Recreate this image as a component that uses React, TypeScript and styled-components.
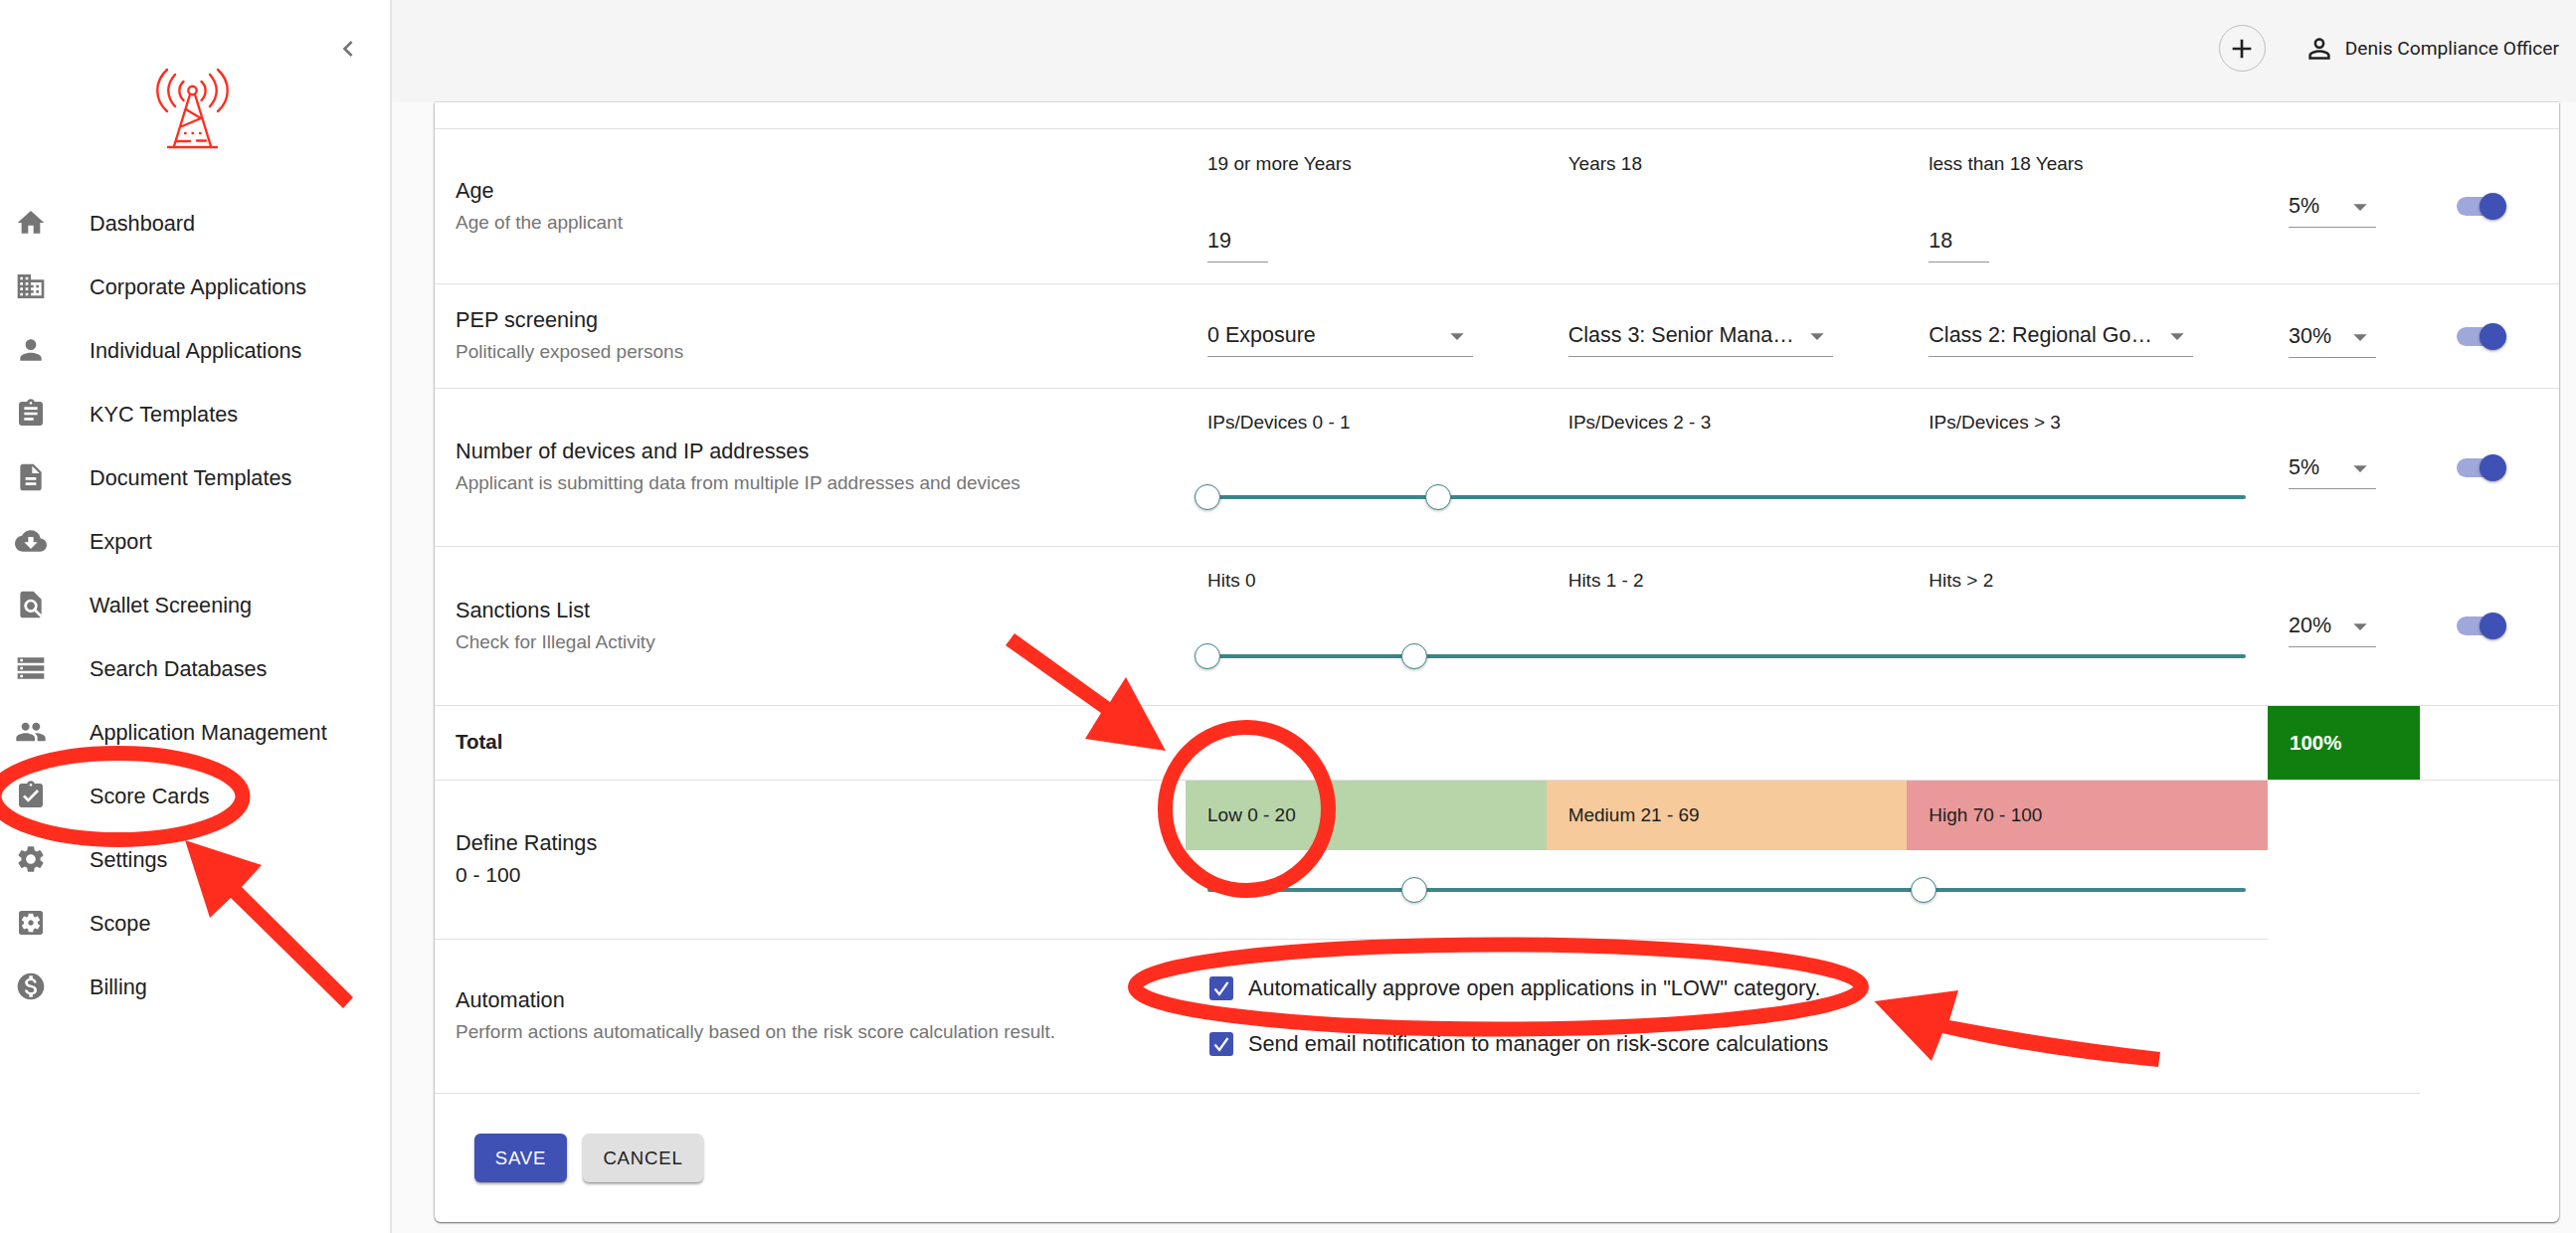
import React from "react";
import styled, { createGlobalStyle } from "styled-components";
import {
  MdHome, MdBusiness, MdPerson, MdAssignment, MdDescription, MdCloudDownload, MdFindInPage,
  MdStorage, MdPeople, MdAssignmentTurnedIn, MdSettings, MdSettingsApplications, MdMonetizationOn,
  MdChevronLeft, MdAdd, MdPersonOutline, MdArrowDropDown,
} from "react-icons/md";

const Global = createGlobalStyle`
  html, body { margin: 0; padding: 0; background: #fafafa; }
  body { font-family: "Liberation Sans", Arial, sans-serif; color: #212121; }
  * { box-sizing: border-box; }
`;

const Root = styled.div`
  position: relative;
  width: 2590px;
  height: 1240px;
  overflow: hidden;
  display: flex;
  background: #fafafa;
`;

const Sidebar = styled.aside`
  width: 394px;
  flex: none;
  background: #fff;
  border-right: 2px solid #e4e4e4;
  display: flex;
  flex-direction: column;
`;
const CollapseRow = styled.div`
  padding: 33px 26px 0 0;
  display: flex;
  justify-content: flex-end;
  color: #757575;
  height: 65px;
`;
const LogoRow = styled.div`
  margin-top: 2px;
  height: 84px;
  padding-left: 155px;
`;
const Nav = styled.nav`
  margin-top: 42px;
  display: flex;
  flex-direction: column;
`;
const NavItem = styled.div`
  height: 64px;
  display: flex;
  align-items: center;
  padding-left: 15px;
  gap: 43px;
  font-size: 21.7px;
  color: #212121;
  svg { color: #757575; flex: none; margin-top: -2px; }
`;

const Main = styled.main`
  flex: 1;
  display: flex;
  flex-direction: column;
  min-width: 0;
`;
const Header = styled.header`
  height: 103px;
  flex: none;
  background: #f5f5f5;
  display: flex;
  align-items: center;
  justify-content: flex-end;
  padding: 0 17px 6px 0;
  color: #212121;
  font-family: Roboto, "Liberation Sans", sans-serif;
  font-size: 19.2px;
`;
const AddButton = styled.div`
  width: 47px;
  height: 47px;
  border-radius: 50%;
  border: 1px solid #bdbdbd;
  display: flex;
  align-items: center;
  justify-content: center;
  margin-right: 38px;
`;
const UserName = styled.div`
  margin-left: 10px;
`;

const Card = styled.section`
  margin-left: 43px;
  width: 2136px;
  height: 1126px;
  background: #fff;
  border-radius: 0 0 6px 6px;
  box-shadow: 0 1px 2px rgba(0,0,0,.55), 0 0 2px rgba(0,0,0,.3);
`;
const Row = styled.div<{ $h: number; $w?: number }>`
  height: ${(p) => p.$h}px;
  width: ${(p) => p.$w ?? 2136}px;
  border-bottom: 1px solid #e0e0e0;
  display: grid;
  grid-template-columns: ${(p) => (p.$w === 1843 ? "755px 1088px" : p.$w === 1996 ? "755px 1241px" : "755px 1088px 153px 140px")};
`;
const LabelCell = styled.div<{ $pb?: number }>`
  padding: 0 0 ${(p) => p.$pb ?? 0}px 21px;
  display: flex;
  flex-direction: column;
  justify-content: center;
`;
const Title = styled.div`
  font-size: 21.7px;
  line-height: 32px;
  color: #212121;
`;
const Sub = styled.div<{ $dark?: boolean }>`
  font-size: ${(p) => (p.$dark ? 21 : 19)}px;
  line-height: 32px;
  color: ${(p) => (p.$dark ? "#212121" : "#757575")};
`;
const TotalLabel = styled.div`
  grid-column: span 2;
  padding: 0 0 2px 21px;
  display: flex;
  align-items: center;
  font-size: 20.5px;
  font-weight: 700;
`;
const Options = styled.div<{ $pt: number }>`
  padding: ${(p) => p.$pt}px 22px 0;
  display: grid;
  grid-template-columns: repeat(3, 1fr);
  column-gap: 44px;
  align-content: start;
  align-items: start;
`;
const OptLabel = styled.div`
  font-size: 19px;
  line-height: 24px;
  color: #212121;
`;
const FieldStack = styled.div``;
const NumberField = styled.div`
  width: 61px;
  height: 43px;
  margin-top: 44px;
  border-bottom: 1px solid #949494;
  display: flex;
  align-items: center;
  font-size: 21.5px;
`;
const Select = styled.div<{ $w: number }>`
  position: relative;
  width: ${(p) => p.$w}px;
  height: 43px;
  border-bottom: 1px solid #949494;
  line-height: 42px;
  font-size: 21.5px;
  color: #212121;
  white-space: nowrap;
  svg {
    position: absolute;
    right: 0;
    top: 6px;
    color: #757575;
  }
`;
const PercentCell = styled.div`
  padding-left: 21px;
  display: flex;
  align-items: center;
`;
const SwitchCell = styled.div`
  padding-left: 37px;
  display: flex;
  align-items: center;
`;
const SwitchTrack = styled.div`
  position: relative;
  width: 46px;
  height: 19px;
  border-radius: 10px;
  background: #9fa8da;
`;
const SwitchThumb = styled.div`
  position: absolute;
  right: -4px;
  top: -4px;
  width: 27px;
  height: 27px;
  border-radius: 50%;
  background: #3f51b5;
  box-shadow: 0 1px 3px rgba(0,0,0,.4);
`;
const SliderBox = styled.div<{ $mt: number }>`
  grid-column: 1 / -1;
  margin-top: ${(p) => p.$mt}px;
  position: relative;
  height: 26px;
  display: flex;
  align-items: center;
`;
const SliderTrack = styled.div`
  width: 100%;
  height: 4px;
  background: #3d8588;
  border-radius: 2px;
`;
const SliderThumb = styled.div`
  position: absolute;
  top: 0;
  width: 26px;
  height: 26px;
  margin-left: -13px;
  border-radius: 50%;
  background: #fff;
  border: 1px solid #3d8588;
  box-shadow: 0 1px 3px rgba(0,0,0,.25);
`;
const GreenCell = styled.div`
  background: #117f10;
  color: #fff;
  font-weight: 700;
  font-size: 20.5px;
  display: flex;
  align-items: center;
  padding-left: 22px;
  height: 74px;
`;
const RatingColumn = styled.div`
  display: flex;
  flex-direction: column;
`;
const RatingBars = styled.div`
  display: grid;
  grid-template-columns: repeat(3, 1fr);
  height: 70px;
`;
const RatingBar = styled.div<{ $bg: string }>`
  background: ${(p) => p.$bg};
  padding-left: 22px;
  display: flex;
  align-items: center;
  font-size: 19px;
  color: #212121;
`;
const RatingSlider = styled.div`
  padding: 0 22px;
  display: grid;
`;
const Checks = styled.div`
  padding: 36px 0 0 24px;
  display: flex;
  flex-direction: column;
  gap: 31px;
`;
const CheckRow = styled.div`
  display: flex;
  align-items: center;
  gap: 15px;
  font-size: 21.7px;
  height: 25px;
  color: #212121;
`;
const CheckBox = styled.div`
  width: 24px;
  height: 24px;
  border-radius: 3px;
  background: #3f51b5;
  display: flex;
  align-items: center;
  justify-content: center;
`;
const Footer = styled.div`
  padding: 40px 0 0 40px;
  display: flex;
  gap: 16px;
`;
const Button = styled.div<{ $primary?: boolean }>`
  height: 49px;
  width: ${(p) => (p.$primary ? 93 : 121)}px;
  border-radius: 6px;
  background: ${(p) => (p.$primary ? "#3f51b5" : "#e0e0e0")};
  color: ${(p) => (p.$primary ? "#fff" : "#212121")};
  font-size: 18.6px;
  letter-spacing: 0.8px;
  display: flex;
  align-items: center;
  justify-content: center;
  box-shadow: 0 2px 3px rgba(0,0,0,.3), 0 1px 1px rgba(0,0,0,.14);
`;
const Annotations = styled.svg`
  position: absolute;
  left: 0;
  top: 0;
  pointer-events: none;
`;

const navItems: [React.ComponentType<{ size?: number }>, string][] = [
  [MdHome, "Dashboard"],
  [MdBusiness, "Corporate Applications"],
  [MdPerson, "Individual Applications"],
  [MdAssignment, "KYC Templates"],
  [MdDescription, "Document Templates"],
  [MdCloudDownload, "Export"],
  [MdFindInPage, "Wallet Screening"],
  [MdStorage, "Search Databases"],
  [MdPeople, "Application Management"],
  [MdAssignmentTurnedIn, "Score Cards"],
  [MdSettings, "Settings"],
  [MdSettingsApplications, "Scope"],
  [MdMonetizationOn, "Billing"],
];

const Logo = () => (
  <svg width="78" height="84" viewBox="155 67 78 84" fill="none" stroke="#ff2d1e" strokeWidth="2.4" strokeLinecap="round" strokeLinejoin="round">
    <circle cx="193.5" cy="91" r="4.2" />
    <path d="M168 70C155 82 155 100 168 112M176 75C167 85 167 97 176 107M184.5 82C179 87 179 95 184.5 101" />
    <path d="M219 70C232 82 232 100 219 112M211 75C220 85 220 97 211 107M202.5 82C208 87 208 95 202.5 101" />
    <path d="M191 95L175 147M196 95L212 147M169 148H218M187 110L202 119L183 127" />
    <path d="M186 134H186.6M193.5 134H194.1M201 134H201.6M198 141.5H207M177 142H191" />
  </svg>
);

const Tick = () => (
  <svg width="24" height="24" viewBox="0 0 24 24" fill="none" stroke="#fff" strokeWidth="2.2">
    <path d="M5.5 12.5L10 18L18.5 6" />
  </svg>
);

const Pct = ({ v }: { v: string }) => (
  <PercentCell>
    <Select $w={88}>
      {v}
      <MdArrowDropDown size={32} />
    </Select>
  </PercentCell>
);
const Toggle = () => (
  <SwitchCell>
    <SwitchTrack>
      <SwitchThumb />
    </SwitchTrack>
  </SwitchCell>
);
const Label = ({ t, s }: { t: string; s: string }) => (
  <LabelCell>
    <Title>{t}</Title>
    <Sub>{s}</Sub>
  </LabelCell>
);
const Slider = ({ mt, stops }: { mt: number; stops: number[] }) => (
  <SliderBox $mt={mt}>
    <SliderTrack />
    {stops.map((x) => (
      <SliderThumb key={x} style={{ left: `${x}px` }} />
    ))}
  </SliderBox>
);

export default function App() {
  return (
    <Root>
      <Global />
      <Sidebar>
        <CollapseRow>
          <MdChevronLeft size={32} />
        </CollapseRow>
        <LogoRow>
          <Logo />
        </LogoRow>
        <Nav>
          {navItems.map(([Icon, label]) => (
            <NavItem key={label}>
              <Icon size={32} />
              {label}
            </NavItem>
          ))}
        </Nav>
      </Sidebar>
      <Main>
        <Header>
          <AddButton>
            <MdAdd size={32} />
          </AddButton>
          <MdPersonOutline size={32} />
          <UserName>Denis Compliance Officer</UserName>
        </Header>
        <Card>
          <Row $h={27} />
          <Row $h={156}>
            <Label t="Age" s="Age of the applicant" />
            <Options $pt={23}>
              <FieldStack>
                <OptLabel>19 or more Years</OptLabel>
                <NumberField>19</NumberField>
              </FieldStack>
              <FieldStack>
                <OptLabel>Years 18</OptLabel>
              </FieldStack>
              <FieldStack>
                <OptLabel>less than 18 Years</OptLabel>
                <NumberField>18</NumberField>
              </FieldStack>
            </Options>
            <Pct v="5%" />
            <Toggle />
          </Row>
          <Row $h={105}>
            <Label t="PEP screening" s="Politically exposed persons" />
            <Options $pt={30}>
              <Select $w={267}>0 Exposure<MdArrowDropDown size={32} /></Select>
              <Select $w={266}>Class 3: Senior Mana…<MdArrowDropDown size={32} /></Select>
              <Select $w={266}>Class 2: Regional Go…<MdArrowDropDown size={32} /></Select>
            </Options>
            <Pct v="30%" />
            <Toggle />
          </Row>
          <Row $h={159}>
            <Label t="Number of devices and IP addresses" s="Applicant is submitting data from multiple IP addresses and devices" />
            <Options $pt={22}>
              <OptLabel>IPs/Devices 0 - 1</OptLabel>
              <OptLabel>IPs/Devices 2 - 3</OptLabel>
              <OptLabel>IPs/Devices &gt; 3</OptLabel>
              <Slider mt={50} stops={[0, 232]} />
            </Options>
            <Pct v="5%" />
            <Toggle />
          </Row>
          <Row $h={160}>
            <Label t="Sanctions List" s="Check for Illegal Activity" />
            <Options $pt={22}>
              <OptLabel>Hits 0</OptLabel>
              <OptLabel>Hits 1 - 2</OptLabel>
              <OptLabel>Hits &gt; 2</OptLabel>
              <Slider mt={51} stops={[0, 208]} />
            </Options>
            <Pct v="20%" />
            <Toggle />
          </Row>
          <Row $h={75}>
            <TotalLabel>Total</TotalLabel>
            <GreenCell>100%</GreenCell>
          </Row>
          <Row $h={160} $w={1843}>
            <LabelCell $pb={2}>
              <Title>Define Ratings</Title>
              <Sub $dark>0 - 100</Sub>
            </LabelCell>
            <RatingColumn>
              <RatingBars>
                <RatingBar $bg="#b7d5a9">Low 0 - 20</RatingBar>
                <RatingBar $bg="#f6ca9b">Medium 21 - 69</RatingBar>
                <RatingBar $bg="#e99999">High 70 - 100</RatingBar>
              </RatingBars>
              <RatingSlider>
                <Slider mt={27} stops={[208, 720]} />
              </RatingSlider>
            </RatingColumn>
          </Row>
          <Row $h={155} $w={1996}>
            <Label t="Automation" s="Perform actions automatically based on the risk score calculation result." />
            <Checks>
              <CheckRow>
                <CheckBox><Tick /></CheckBox>
                Automatically approve open applications in "LOW" category.
              </CheckRow>
              <CheckRow>
                <CheckBox><Tick /></CheckBox>
                Send email notification to manager on risk-score calculations
              </CheckRow>
            </Checks>
          </Row>
          <Footer>
            <Button $primary>SAVE</Button>
            <Button>CANCEL</Button>
          </Footer>
        </Card>
      </Main>
      <Annotations width="2590" height="1240" viewBox="0 0 2590 1240">
        <g fill="none" stroke="#ff2d1e" strokeWidth="15">
          <ellipse cx="119" cy="801" rx="125" ry="43.5" />
          <circle cx="1253.5" cy="813.5" r="82" />
          <ellipse cx="1506.5" cy="992.5" rx="365" ry="42.5" />
        </g>
        <g fill="#ff2d1e">
          <polygon points="186,845 263,870 243,892 355,1003 345,1014 232,903 211,923" />
          <polygon points="1020,637 1116,706 1132,681 1172,755 1091,743 1107,717 1011,649" />
          <path d="M1884.5 1007L1969 996L1960 1026Q2060 1045 2172 1058L2170 1073Q2050 1062 1953 1039L1942 1067Z" />
        </g>
      </Annotations>
    </Root>
  );
}
